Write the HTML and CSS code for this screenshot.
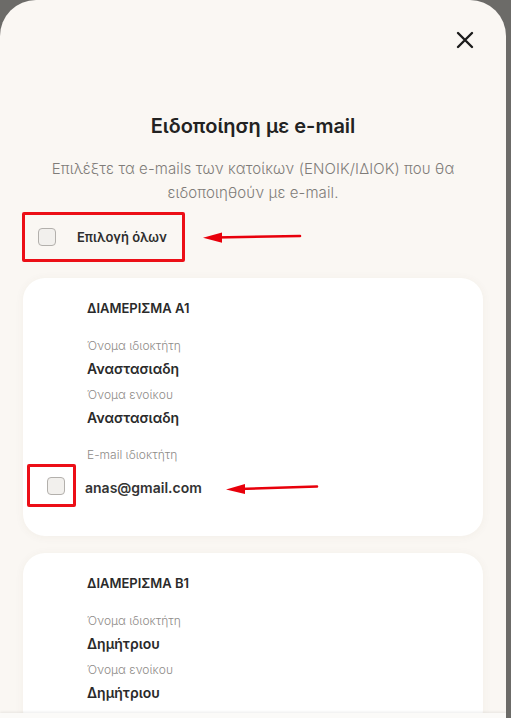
FILE: index.html
```html
<!DOCTYPE html>
<html lang="el">
<head>
	<meta charset="UTF-8">
	<title>Ειδοποίηση με e-mail</title>
	<link rel="stylesheet" href="styles.css">
</head>
<body>
<div class="modal">
	<div class="modal-top">
		<button class="close" type="button" aria-label="close">
			<svg width="18" height="18" viewBox="0 0 18 18"><path d="M2 2 L16 16 M16 2 L2 16" stroke="#1c1c1c" stroke-width="2.4" stroke-linecap="round"/></svg>
		</button>
	</div>

	<h2 class="title">Ειδοποίηση με e-mail</h2>
	<p class="subtitle">Επιλέξτε τα e-mails των κατοίκων (ΕΝΟΙΚ/ΙΔΙΟΚ) που θα ειδοποιηθούν με e-mail.</p>

	<div class="select-row">
		<label class="mark select-all">
			<span class="check"></span>
			<span class="select-label">Επιλογή όλων</span>
		</label>
		<svg class="arrow" width="100" height="12" viewBox="0 0 100 12"><path d="M12 6.5 L97 5" stroke="#e8000b" stroke-width="2.6" stroke-linecap="round"/><path d="M0 6.8 L19 1.5 L19 11.8 Z" fill="#e8000b"/></svg>
	</div>

	<div class="card">
		<h3 class="flat">ΔΙΑΜΕΡΙΣΜΑ Α1</h3>
		<div class="lbl first">Όνομα ιδιοκτήτη</div>
		<div class="val">Αναστασιαδη</div>
		<div class="lbl">Όνομα ενοίκου</div>
		<div class="val">Αναστασιαδη</div>
		<div class="lbl mail-lbl">E-mail ιδιοκτήτη</div>
		<div class="mail-row">
			<label class="mark mail-mark"><span class="check"></span></label>
			<span class="mail">anas@gmail.com</span>
			<svg class="arrow arrow2" width="94" height="12" viewBox="0 0 94 12"><path d="M12 7 L91 4.5" stroke="#e8000b" stroke-width="2.6" stroke-linecap="round"/><path d="M0 7.4 L19 2 L19 12 Z" fill="#e8000b"/></svg>
		</div>
	</div>

	<div class="card">
		<h3 class="flat">ΔΙΑΜΕΡΙΣΜΑ Β1</h3>
		<div class="lbl first">Όνομα ιδιοκτήτη</div>
		<div class="val">Δημήτριου</div>
		<div class="lbl">Όνομα ενοίκου</div>
		<div class="val">Δημήτριου</div>
	</div>

	<div class="foot"></div>
</div>
</body>
</html>
```

FILE: styles.css
```css
body,div,h2,h3,p,label,button { margin:0; padding:0; }
html, body { height:100%; }
body { background:#6c6b68; font-family: Inter, "Noto Sans", Arial, sans-serif; color:#2a2a2a; overflow:hidden; }

.modal {
	position: relative;
	width: 506px;
	height: 718px;
	background: #faf7f3;
	border-radius: 36px 36px 0 0;
	padding: 0 23px;
	box-sizing: border-box;
	overflow: hidden;
}
.modal-top {
	display: flex;
	justify-content: flex-end;
	padding-top: 31px;
	margin-right: 9px;
}
.close {
	background: none;
	border: none;
	width: 18px;
	height: 18px;
	display: block;
	cursor: pointer;
}
.close svg { display:block; }

.title {
	margin-top: 65px;
	text-align: center;
	font-size: 20px;
	font-weight: 600;
	line-height: 24px;
	color: #222;
}
.subtitle {
	margin: 19px 6px 0;
	text-align: center;
	font-size: 15px;
	line-height: 24px;
	font-weight: 300;
	color: #7f7c79;
	letter-spacing: 0.1px;
}

.select-row {
	display: flex;
	align-items: center;
	margin-top: 7px;
	margin-left: -1px;
}
.mark {
	display: flex;
	align-items: center;
	border: 3px solid #ec0f17;
	border-radius: 2px;
	box-sizing: border-box;
}
.select-all {
	width: 163px;
	height: 50px;
	padding-left: 13px;
}
.check {
	width: 18px;
	height: 18px;
	box-sizing: border-box;
	border: 1.5px solid #b3b0ac;
	border-radius: 4px;
	background: #f2f0ed;
	flex: none;
}
.select-label {
	margin-left: 21px;
	font-size: 13px;
	font-weight: 600;
	color: #2e2e2e;
}
.arrow { display:block; margin-left:18px; }

.card {
	margin-top: 16px;
	background: #fff;
	border-radius: 22px;
	padding: 20px 24px 29px 64px;
	box-shadow: 0 1px 10px rgba(90,70,40,0.05);
}
.card + .card { margin-top: 17px; }
.flat {
	font-size: 13px;
	font-weight: 600;
	line-height: 20px;
	color: #2a2a2a;
}
.lbl {
	margin-top: 6px;
	font-size: 12px;
	font-weight: 300;
	line-height: 20px;
	color: #8e8b88;
}
.lbl.first { margin-top: 18px; }
.lbl.mail-lbl { margin-top: 17px; }
.val {
	margin-top: 3px;
	font-size: 14px;
	font-weight: 600;
	line-height: 20px;
	color: #2a2a2a;
}
.mail-row {
	display: flex;
	align-items: center;
	margin-left: -60px;
	margin-top: -1px;
}
.mail-mark {
	width: 49px;
	height: 43px;
	padding-left: 17px;
}
.mail {
	margin-left: 9px;
	font-size: 14px;
	font-weight: 600;
	color: #333;
	padding-top: 4px;
}
.arrow2 { margin-left: 24px; margin-top: 4px; }

.foot {
	position: absolute;
	left: 0;
	right: 0;
	bottom: 0;
	height: 5px;
	background: #fbfaf8;
	box-shadow: 0 -1px 3px rgba(0,0,0,0.08);
}
```
